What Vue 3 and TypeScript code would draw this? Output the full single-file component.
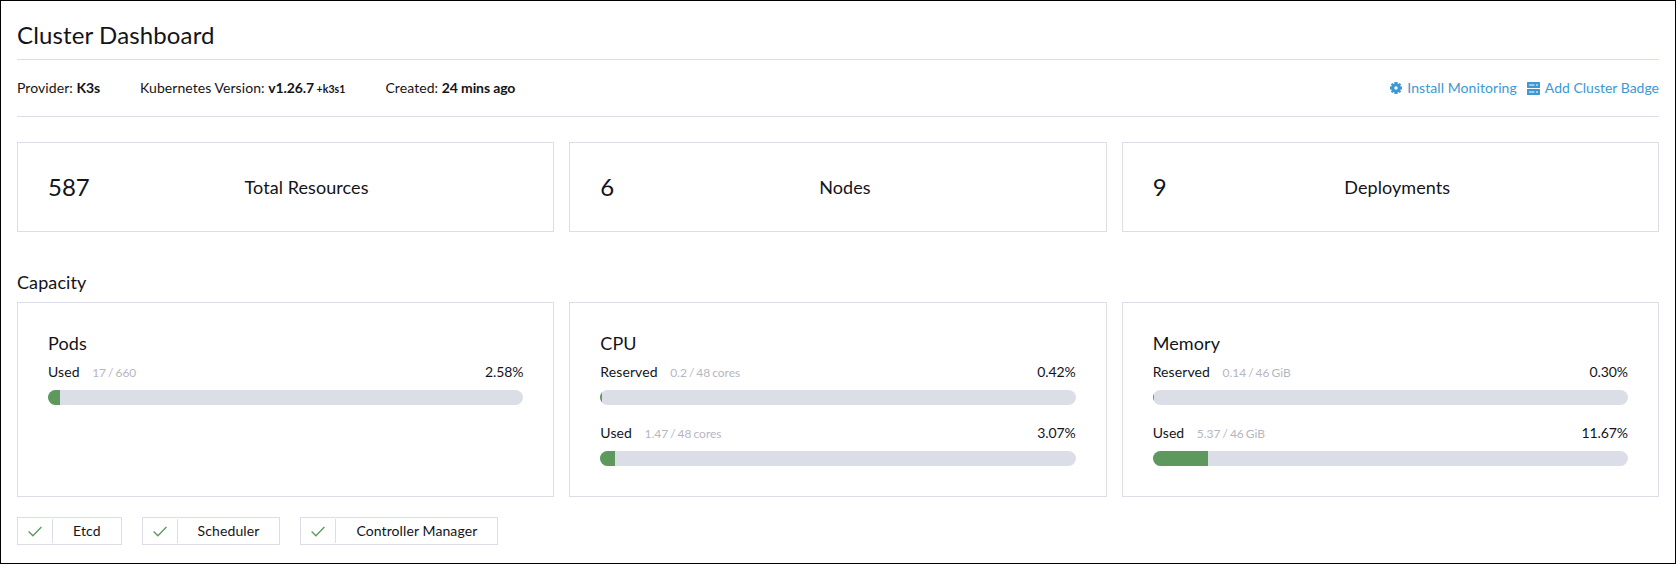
<script setup lang="ts">
interface Meter {
  label: string
  detail: string
  percent: string
  value: number
}

interface CapacityCard {
  title: string
  meters: Meter[]
}

const counts = [
  { value: 587, label: 'Total Resources' },
  { value: 6, label: 'Nodes' },
  { value: 9, label: 'Deployments' },
]

const capacity: CapacityCard[] = [
  {
    title: 'Pods',
    meters: [{ label: 'Used', detail: '17 / 660', percent: '2.58%', value: 2.58 }],
  },
  {
    title: 'CPU',
    meters: [
      { label: 'Reserved', detail: '0.2 / 48 cores', percent: '0.42%', value: 0.42 },
      { label: 'Used', detail: '1.47 / 48 cores', percent: '3.07%', value: 3.07 },
    ],
  },
  {
    title: 'Memory',
    meters: [
      { label: 'Reserved', detail: '0.14 / 46 GiB', percent: '0.30%', value: 0.3 },
      { label: 'Used', detail: '5.37 / 46 GiB', percent: '11.67%', value: 11.67 },
    ],
  },
]

const services = ['Etcd', 'Scheduler', 'Controller Manager']
</script>

<template>
  <main class="dashboard">
    <header class="title-bar">
      <h1>Cluster Dashboard</h1>
    </header>

    <section class="glance">
      <div class="glance-item"><span>Provider: </span><b>K3s</b></div>
      <div class="glance-item">
        <span>Kubernetes Version: </span><b>v1.26.7</b><small> +k3s1</small>
      </div>
      <div class="glance-item"><span>Created: </span><b>24 mins ago</b></div>
      <nav class="actions">
        <a class="action">
          <svg class="gear" width="12" height="12" viewBox="0 0 12 12">
            <path
              fill="currentColor"
              fill-rule="evenodd"
              d="M4.4 0h3.2v1.5l.9.4L9.8 1l1.3 1.4-.8 1.1.3.9H12v3.2h-1.4l-.3.9.8 1.1L9.8 11l-1.3-.9-.9.4V12H4.4v-1.5l-.9-.4-1.3.9L.9 9.6l.8-1.1-.3-.9H0V4.4h1.4l.3-.9-.8-1.1L2.2 1l1.3.9.9-.4zM6 4.3a1.7 1.7 0 1 0 0 3.4 1.7 1.7 0 0 0 0-3.4z"
            />
          </svg>
          <span class="install-text">Install Monitoring</span>
        </a>
        <a class="action">
          <svg class="badge-icon" width="13" height="13" viewBox="0 0 13 13">
            <path
              fill="currentColor"
              fill-rule="evenodd"
              d="M.6 0h11.8q.6 0 .6.6v4.8q0 .6-.6.6H.6Q0 6 0 5.4V.6Q0 0 .6 0zM.6 7h11.8q.6 0 .6.6v4.800q0 .6-.6.6H.6q-.6 0-.6-.6V7.600Q0 7 .6 7zM2 2.500v1h5.500v-1zM9 2.500v1h2v-1zM2 9.500v1h5.500v-1zM9 9.500v1h2v-1z"
            />
          </svg>
          <span>Add Cluster Badge</span>
        </a>
      </nav>
    </section>

    <section class="grid counts">
      <article v-for="item in counts" :key="item.label" class="card count">
        <span class="number">{{ item.value }}</span>
        <span class="name">{{ item.label }}</span>
      </article>
    </section>

    <h2 class="section-title">Capacity</h2>
    <section class="grid capacity">
      <article v-for="card in capacity" :key="card.title" class="card gauge">
        <h3>{{ card.title }}</h3>
        <div v-for="meter in card.meters" :key="meter.label" class="meter">
          <div class="meter-text">
            <span class="label">{{ meter.label }}</span>
            <span class="detail">{{ meter.detail }}</span>
            <span class="percent">{{ meter.percent }}</span>
          </div>
          <div class="track">
            <div class="fill" :style="{ width: meter.value + '%' }"></div>
          </div>
        </div>
      </article>
    </section>

    <section class="services">
      <div v-for="service in services" :key="service" class="service">
        <span class="status">
          <svg width="14" height="11" viewBox="0 0 14 11">
            <path d="M.6 5.6 4.9 9.8 13.4 1" fill="none" stroke="currentColor" stroke-width="1.35" />
          </svg>
        </span>
        <span class="service-name">{{ service }}</span>
      </div>
    </section>
  </main>
</template>

<style>
body {
  margin: 0;
  background: #fff;
}
</style>

<style scoped>
.dashboard {
  box-sizing: border-box;
  width: 100%;
  height: 564px;
  padding: 0 16px;
  border: 1px solid #000;
  overflow: hidden;
  background: #fff;
  color: #141419;
  font-family: Lato, sans-serif;
  font-size: 14px;
  line-height: 18px;
}

h1,
h2,
h3 {
  margin: 0;
  font-weight: 400;
}

.title-bar {
  box-sizing: border-box;
  height: 59px;
  padding-top: 19px;
  border-bottom: 1px solid #dcdee7;
}

h1 {
  font-size: 24px;
  line-height: 29px;
  letter-spacing: 0.13px;
}

.glance {
  box-sizing: border-box;
  display: flex;
  align-items: center;
  height: 57px;
  border-bottom: 1px solid #dcdee7;
}

.glance-item {
  margin-right: 40px;
  letter-spacing: 0.07px;
  white-space: pre;
}

.glance-item b {
  letter-spacing: -0.12px;
}

small {
  font-size: 10.5px;
  font-weight: 700;
}

.actions {
  display: flex;
  gap: 10px;
  margin-left: auto;
  color: #3d98d3;
}

.action {
  display: flex;
  align-items: center;
}

.gear {
  margin-right: 5px;
}

.install-text {
  letter-spacing: 0.07px;
}

.badge-icon {
  margin-right: 5px;
}

.grid {
  display: grid;
  grid-template-columns: repeat(3, 1fr);
  column-gap: 15px;
}

.card {
  box-sizing: border-box;
  border: 1px solid #dcdee7;
}

.counts {
  margin-top: 25px;
}

.count {
  display: flex;
  align-items: center;
  height: 90px;
  padding: 0 30px;
}

.number {
  font-size: 24px;
}

.name {
  flex: 1;
  text-align: center;
  font-size: 18px;
  letter-spacing: 0.07px;
}

.section-title {
  margin-top: 39px;
  font-size: 18px;
  line-height: 22px;
  letter-spacing: 0.1px;
}

.capacity {
  margin-top: 9px;
}

.gauge {
  height: 195px;
  padding: 29px 30px 30px;
}

h3 {
  height: 23px;
  font-size: 18px;
  line-height: 22px;
  letter-spacing: 0.1px;
}

.meter {
  height: 61px;
}

.meter-text {
  display: flex;
  align-items: baseline;
  height: 35px;
  line-height: 34px;
}

.label {
  letter-spacing: 0.1px;
}

.detail {
  margin-left: 12.5px;
  color: #b6b6c2;
  font-size: 12px;
  word-spacing: -1.1px;
}

.percent {
  margin-left: auto;
  letter-spacing: -0.1px;
}

.track {
  height: 15px;
  border-radius: 7.5px;
  overflow: hidden;
  background: #dcdee7;
}

.fill {
  height: 100%;
  background: #5d995d;
}

.services {
  display: flex;
  gap: 20px;
  margin-top: 20px;
}

.service {
  box-sizing: border-box;
  display: flex;
  height: 28px;
  padding: 1px 0;
  border: 1px solid #dcdee7;
}

.status {
  box-sizing: border-box;
  display: flex;
  align-items: center;
  justify-content: center;
  width: 35px;
  border-right: 1px solid #dcdee7;
  color: #5d995d;
}

.service-name {
  padding: 0 20px;
  line-height: 24px;
  letter-spacing: 0.1px;
}
</style>
